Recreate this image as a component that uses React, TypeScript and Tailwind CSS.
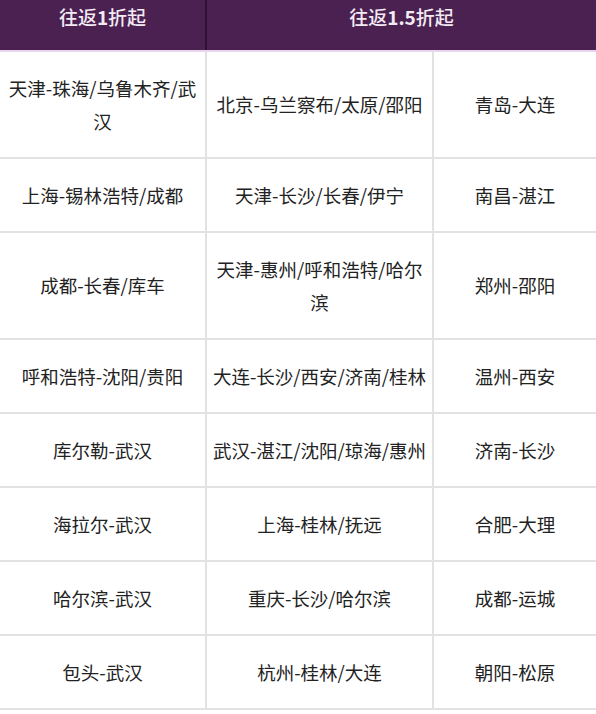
import React from 'react';

const rows: { cells: string[]; tall?: boolean }[] = [
  { cells: ['天津-珠海/乌鲁木齐/武汉', '北京-乌兰察布/太原/邵阳', '青岛-大连'], tall: true },
  { cells: ['上海-锡林浩特/成都', '天津-长沙/长春/伊宁', '南昌-湛江'] },
  { cells: ['成都-长春/库车', '天津-惠州/呼和浩特/哈尔滨', '郑州-邵阳'], tall: true },
  { cells: ['呼和浩特-沈阳/贵阳', '大连-长沙/西安/济南/桂林', '温州-西安'] },
  { cells: ['库尔勒-武汉', '武汉-湛江/沈阳/琼海/惠州', '济南-长沙'] },
  { cells: ['海拉尔-武汉', '上海-桂林/抚远', '合肥-大理'] },
  { cells: ['哈尔滨-武汉', '重庆-长沙/哈尔滨', '成都-运城'] },
  { cells: ['包头-武汉', '杭州-桂林/大连', '朝阳-松原'] },
];

const font = { fontFamily: '"Noto Sans CJK SC", "Noto Sans", sans-serif' };

export default function App() {
  return (
    <div className="w-[596px] h-[714px] overflow-hidden bg-white" style={font}>
      {/* Header */}
      <div className="flex h-[52px] bg-[#4a2150] border-b-2 border-[#e9d6ee] text-[#f3eaf4] text-[19px] font-medium">
        <div className="w-[207px] shrink-0 border-r-2 border-[#2f1135] flex justify-center pt-[4px] leading-[26px]">
          往返<span className="font-bold">1</span>折起
        </div>
        <div className="flex-1 flex justify-center pt-[4px] leading-[26px]">
          往返<span className="font-bold">1.5</span>折起
        </div>
      </div>

      {/* Body */}
      {rows.map((row, i) => (
        <div
          key={i}
          className={`flex border-b-2 border-[#e2e2e2] text-[18.5px] leading-[33px] text-[#222] ${row.tall ? 'h-[107px]' : 'h-[74px]'}`}
        >
          <div className="w-[207px] shrink-0 border-r-2 border-[#e2e2e2] flex items-center justify-center text-center px-[2px]">
            {row.cells[0]}
          </div>
          <div className="w-[227px] shrink-0 border-r-2 border-[#e2e2e2] flex items-center justify-center text-center px-[2px]">
            {row.cells[1]}
          </div>
          <div className="flex-1 flex items-center justify-center text-center px-[2px]">
            {row.cells[2]}
          </div>
        </div>
      ))}
    </div>
  );
}
